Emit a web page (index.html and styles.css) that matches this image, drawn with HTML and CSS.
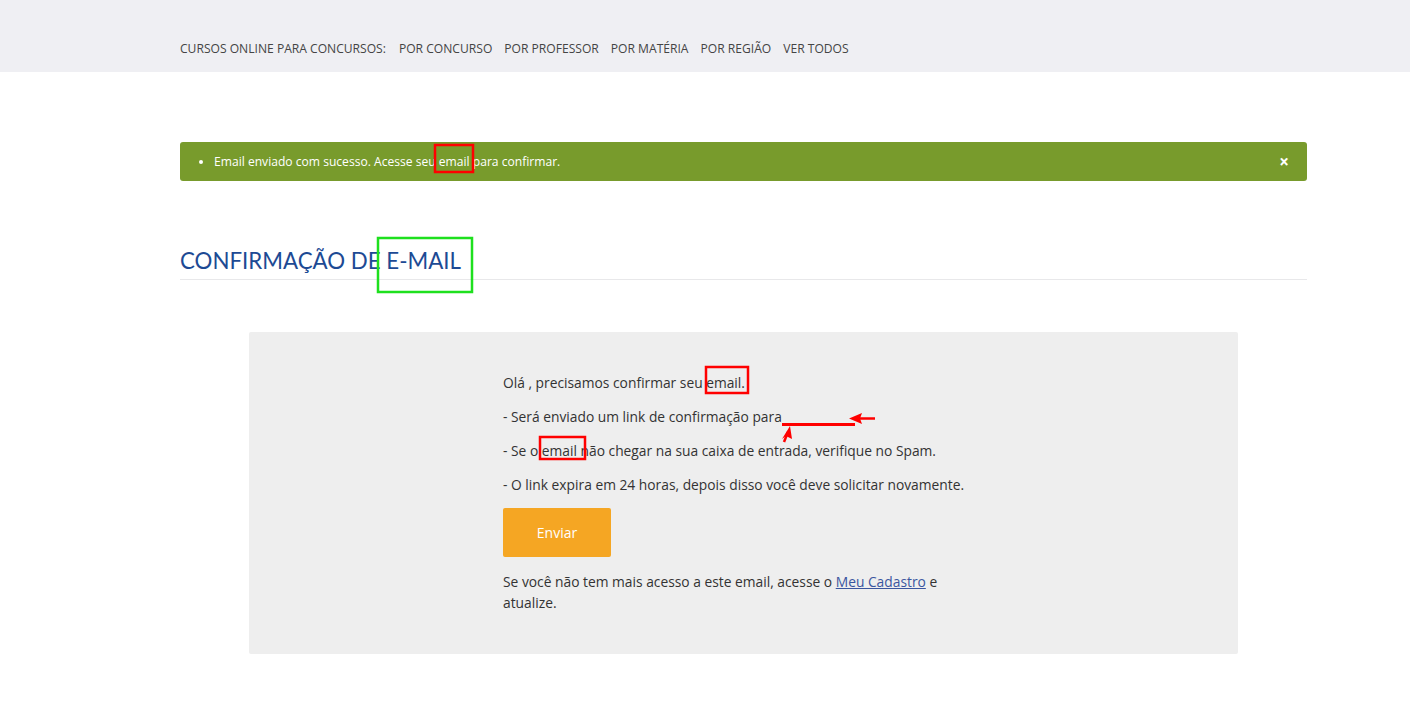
FILE: index.html
```html
<!DOCTYPE html>
<html lang="pt-BR">
<head>
<meta charset="utf-8">
<title>Confirmação de e-mail</title>
<link rel="stylesheet" href="styles.css">
</head>
<body>
<header class="topbar">
  <nav class="container nav">
    <span class="nav-label">CURSOS ONLINE PARA CONCURSOS:</span>
    <a href="#">POR CONCURSO</a>
    <a href="#">POR PROFESSOR</a>
    <a href="#">POR MATÉRIA</a>
    <a href="#">POR REGIÃO</a>
    <a href="#">VER TODOS</a>
  </nav>
</header>
<main class="container main">
  <div class="alert">
    <ul class="alert-list"><li>Email enviado com sucesso. Acesse seu email para confirmar.</li></ul>
    <span class="alert-close">×</span>
  </div>
  <h1 class="page-title">CONFIRMAÇÃO DE E-MAIL</h1>
  <section class="panel">
    <div class="panel-body">
      <p>Olá , precisamos confirmar seu email.</p>
      <p>- Será enviado um link de confirmação para</p>
      <p>- Se o email não chegar na sua caixa de entrada, verifique no Spam.</p>
      <p>- O link expira em 24 horas, depois disso você deve solicitar novamente.</p>
      <button class="btn">Enviar</button>
      <p class="note">Se você não tem mais acesso a este email, acesse o <a href="#">Meu Cadastro</a> e atualize.</p>
    </div>
  </section>
</main>
<svg class="annotations" width="1410" height="721" viewBox="0 0 1410 721">
  <g fill="none" stroke="#ff0000" stroke-width="2.5">
    <rect x="435" y="145" width="38" height="27"/>
    <rect x="706" y="367" width="42" height="26"/>
    <rect x="540" y="437" width="45" height="22"/>
  </g>
  <rect x="378" y="238" width="94" height="54" fill="none" stroke="#1ee01e" stroke-width="2.5"/>
  <line x1="782" y1="424.5" x2="855" y2="424.5" stroke="#ff0000" stroke-width="3"/>
  <line x1="858" y1="418.5" x2="875" y2="418.5" stroke="#ff0000" stroke-width="2.5"/>
  <polygon points="849,418.5 862,413 860,418.5 862,424" fill="#ff0000"/>
  <line x1="784" y1="442" x2="788" y2="432" stroke="#ff0000" stroke-width="2.5"/>
  <polygon points="790,426 792,439 786,436 782,439" fill="#ff0000"/>
</svg>
</body>
</html>
```
FILE: styles.css
```css
* { box-sizing: border-box; }
html, body { margin: 0; padding: 0; }
body {
  font-family: "Open Sans", "Liberation Sans", sans-serif;
  color: #333;
  background: #fff;
  position: relative;
  min-height: 721px;
}
.container {
  width: 1127px;
  margin-left: 180px;
}
.topbar {
  background: #efeff3;
  height: 72px;
}
.nav {
  display: flex;
  gap: 12px;
  align-items: center;
  padding-top: 40px;
  font-size: 12.1px;
  color: #444;
  line-height: 18px;
}
.nav a { color: #444; text-decoration: none; }
.nav-label { margin-right: 1px; }
.main { padding-top: 70px; }
.alert {
  background: #789b2c;
  border-radius: 3px;
  height: 39px;
  display: flex;
  align-items: center;
  justify-content: space-between;
  padding: 0 18px 0 20px;
  color: #fff;
  font-size: 12.1px;
}
.alert-list {
  margin: 0;
  padding-left: 14px;
}
.alert-list li { line-height: 18px; }
.alert-close {
  font-size: 17px;
  font-weight: 700;
  line-height: 1;
}
.page-title {
  font-family: "Lato", "Noto Sans", sans-serif;
  font-weight: 400;
  font-size: 22.3px;
  color: #1d4a94;
  margin: 64px 0 0;
  line-height: 32px;
  padding-bottom: 2px;
  border-bottom: 1px solid #e8e8ea;
}
.panel {
  margin: 52px 69px 0 69px;
  background: #eeeeee;
  border-radius: 2px;
  height: 322px;
  padding-top: 40px;
}
.panel-body {
  width: 481px;
  margin: 0 auto;
  font-size: 13.8px;
  line-height: 21px;
  color: #333;
}
.panel-body p { margin: 0 0 13px; }
.btn {
  display: block;
  width: 108px;
  height: 49px;
  border: none;
  border-radius: 2px;
  background: #f5a623;
  color: #fff;
  font-family: "Open Sans", "Liberation Sans", sans-serif;
  font-size: 14px;
  margin: 0 0 14px;
}
.panel-body .note { margin: 0; }
.note a { color: #3b56a0; }
.annotations {
  position: absolute;
  left: 0;
  top: 0;
  pointer-events: none;
}
```
